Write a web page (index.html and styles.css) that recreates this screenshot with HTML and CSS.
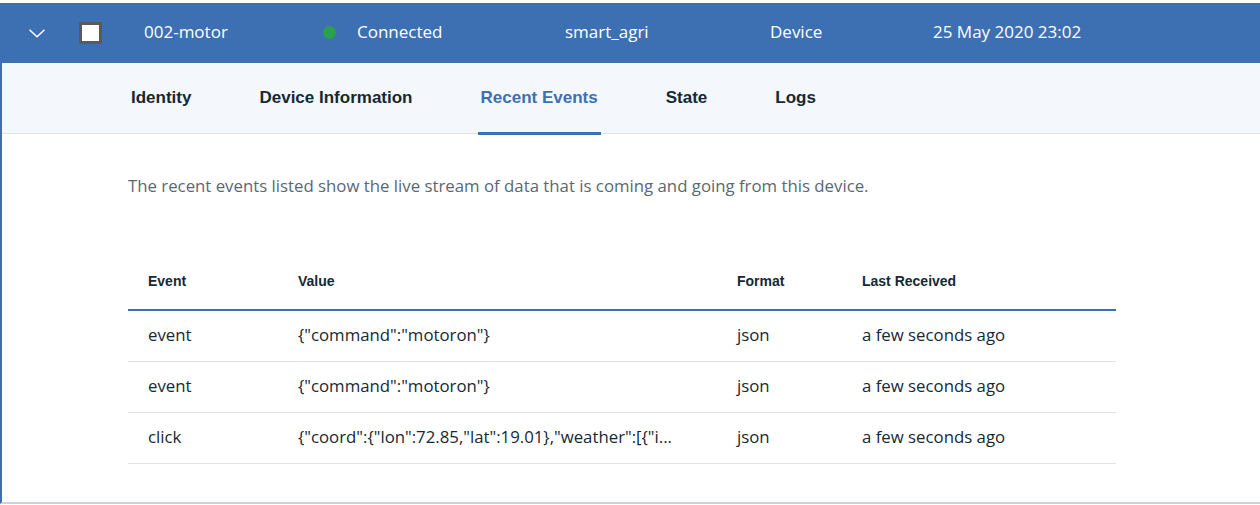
FILE: index.html
```html
<!DOCTYPE html>
<html lang="en">
<head>
<meta charset="utf-8">
<title>002-motor</title>
<link rel="stylesheet" href="styles.css">
</head>
<body>
<div class="device-row">
  <div class="cell cell-toggle">
    <svg class="chevron" width="16" height="9" viewBox="0 0 16 9"><polyline points="0.5,0.8 8,7.8 15.5,0.8" fill="none" stroke="#ffffff" stroke-width="1.5"/></svg>
  </div>
  <div class="cell cell-check"><span class="checkbox"></span></div>
  <div class="cell cell-text">002-motor</div>
  <div class="cell cell-text cell-status"><span class="dot"></span>Connected</div>
  <div class="cell cell-text">smart_agri</div>
  <div class="cell cell-text">Device</div>
  <div class="cell cell-text">25 May 2020 23:02</div>
</div>

<div class="panel">
  <nav class="tabs">
    <span class="tab">Identity</span>
    <span class="tab">Device Information</span>
    <span class="tab tab-active">Recent Events</span>
    <span class="tab">State</span>
    <span class="tab">Logs</span>
  </nav>

  <div class="content">
    <p class="desc">The recent events listed show the live stream of data that is coming and going from this device.</p>

    <table class="events">
      <colgroup>
        <col class="c-event"><col class="c-value"><col class="c-format"><col class="c-last">
      </colgroup>
      <thead>
        <tr><th>Event</th><th>Value</th><th>Format</th><th>Last Received</th></tr>
      </thead>
      <tbody>
        <tr><td>event</td><td>{"command":"motoron"}</td><td>json</td><td>a few seconds ago</td></tr>
        <tr><td>event</td><td>{"command":"motoron"}</td><td>json</td><td>a few seconds ago</td></tr>
        <tr><td>click</td><td>{"coord":{"lon":72.85,"lat":19.01},"weather":[{"i...</td><td>json</td><td>a few seconds ago</td></tr>
      </tbody>
    </table>
  </div>
</div>
</body>
</html>
```
FILE: styles.css
```css
* { box-sizing: border-box; }

html, body {
  margin: 0;
  padding: 0;
  background: #ffffff;
  font-family: "Open Sans", "Liberation Sans", Arial, sans-serif;
  color: #152935;
}

body { padding-top: 3px; }

.device-row {
  height: 60px;
  background: #3d70b2;
  color: #ffffff;
  font-size: 17px;
  display: grid;
  grid-template-columns: 79px 65px 179px 242px 205px 163px 1fr;
  align-items: center;
}

.cell { white-space: nowrap; }

.cell-text { padding-bottom: 4px; }

.cell-toggle { padding-left: 29px; display: flex; align-items: center; }

.cell-check { display: flex; align-items: center; }

.checkbox {
  display: block;
  width: 23px;
  height: 22px;
  background: #ffffff;
  border: 3px solid #5a5a5a;
}

.cell-status { display: flex; align-items: center; gap: 21px; }

.dot {
  width: 13px;
  height: 13px;
  border-radius: 50%;
  background: #2aa14a;
  margin-top: 3px;
}

.panel {
  border-left: 2px solid #3d70b2;
  border-bottom: 2px solid #cfd3d6;
  padding-bottom: 38px;
}

.tabs {
  height: 71px;
  background: #f4f7fb;
  border-bottom: 1px solid #dfe3e6;
  display: flex;
  align-items: center;
  gap: 62px;
  padding-left: 126px;
}

.tab {
  position: relative;
  padding: 0 3px;
  font-family: "Liberation Sans", Arial, sans-serif;
  font-size: 17px;
  font-weight: 700;
  color: #152935;
  height: 70px;
  line-height: 70px;
}

.tab-active { color: #3d70b2; }

.tab-active::after {
  content: "";
  position: absolute;
  left: 0;
  right: 0;
  bottom: -2px;
  height: 3px;
  background: #3d70b2;
}

.content { padding-left: 126px; }

.desc {
  margin: 0;
  padding-top: 40px;
  font-size: 16.8px;
  line-height: 24px;
  color: #5a6872;
}

.events {
  margin-top: 59px;
  width: 988px;
  border-collapse: collapse;
  table-layout: fixed;
}

.c-event { width: 150px; }
.c-value { width: 439px; }
.c-format { width: 125px; }
.c-last { width: 274px; }

.events th {
  text-align: left;
  font-family: "Liberation Sans", Arial, sans-serif;
  font-size: 14px;
  font-weight: 700;
  line-height: 18px;
  padding: 15px 20px 19px;
  border-bottom: 2px solid #3d70b2;
  color: #152935;
}

.events td {
  height: 51px;
  padding: 0 20px 1px;
  font-size: 16.8px;
  line-height: 24px;
  border-bottom: 1px solid #dfe3e6;
  color: #152935;
  white-space: nowrap;
  overflow: hidden;
  text-overflow: ellipsis;
}
```
